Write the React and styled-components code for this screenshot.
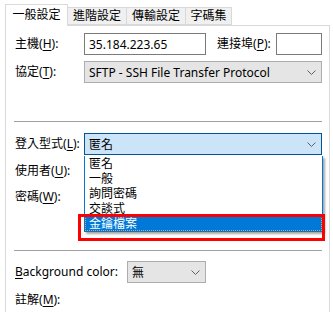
import React from "react";
import styled, { createGlobalStyle } from "styled-components";

const GlobalStyle = createGlobalStyle`
  html, body {
    margin: 0;
    padding: 0;
    background: #fff;
  }
  body {
    font-family: "Segoe UI", "Noto Sans", "Noto Sans CJK TC", sans-serif;
    font-size: 12px;
    color: #000;
  }
`;

const tabs = [
  { label: "一般設定", w: 63, active: true },
  { label: "進階設定", w: 59 },
  { label: "傳輸設定", w: 59 },
  { label: "字碼集", w: 46 },
];

const listItems = ["匿名", "一般", "詢問密碼", "交談式", "金鑰檔案"];

function Chevron() {
  return (
    <svg width="9" height="5" viewBox="0 0 9 5">
      <path d="M0.5 0.5 L4.5 4.5 L8.5 0.5" fill="none" stroke="#606060" strokeWidth="1" />
    </svg>
  );
}

function Label({ text, k }) {
  return (
    <span>
      {text}(<u>{k}</u>):
    </span>
  );
}

function App() {
  return (
    <Window>
      <GlobalStyle />
      <TabStrip>
        {tabs.map((t) => (
          <Tab key={t.label} $w={t.w} $active={t.active}>
            {t.label}
          </Tab>
        ))}
      </TabStrip>
      <Panel>
        <Row>
          <FieldLabel>
            <Label text="主機" k="H" />
          </FieldLabel>
          <TextBox $w={122}>35.184.223.65</TextBox>
          <FieldLabel $w={59} $ml={11}>
            <Label text="連接埠" k="P" />
          </FieldLabel>
          <TextBox $w={46} />
        </Row>
        <Row $mt={6}>
          <FieldLabel>
            <Label text="協定" k="T" />
          </FieldLabel>
          <Select $w={238}>
            <span>SFTP - SSH File Transfer Protocol</span>
            <Chevron />
          </Select>
        </Row>
        <Separator $mt={38} />
        <Row $mt={11}>
          <FieldLabel>
            <Label text="登入型式" k="L" />
          </FieldLabel>
          <Select $w={238} $focused>
            <span>匿名</span>
            <Chevron />
          </Select>
        </Row>
        <Row $mt={5}>
          <FieldLabel>
            <Label text="使用者" k="U" />
          </FieldLabel>
        </Row>
        <Row $mt={4}>
          <FieldLabel>
            <Label text="密碼" k="W" />
          </FieldLabel>
        </Row>
        <Separator $mt={42} />
        <Row $mt={10}>
          <FieldLabel $w={112}>
            <span>
              <u>B</u>ackground color:
            </span>
          </FieldLabel>
          <Select $w={79}>
            <span>無</span>
            <Chevron />
          </Select>
        </Row>
        <Row $mt={6}>
          <FieldLabel>
            <Label text="註解" k="M" />
          </FieldLabel>
        </Row>
      </Panel>

      <DropList>
        {listItems.map((item, i) => (
          <ListItem key={item} $selected={i === listItems.length - 1}>
            {item}
          </ListItem>
        ))}
      </DropList>
      <RedFrame />
    </Window>
  );
}

export default App;

const Window = styled.div`
  position: relative;
  width: 333px;
  height: 312px;
  overflow: hidden;
  background: #fff;
`;

const TabStrip = styled.div`
  display: flex;
  align-items: flex-end;
  height: 25px;
  padding-left: 5px;
  box-sizing: border-box;
`;

const Tab = styled.div`
  width: ${(p) => p.$w}px;
  height: ${(p) => (p.$active ? 22 : 18)}px;
  margin-bottom: ${(p) => (p.$active ? -1 : 0)}px;
  box-sizing: border-box;
  border: 1px solid #d9d9d9;
  border-left: ${(p) => (p.$active ? "1px solid #d9d9d9" : "none")};
  border-bottom: ${(p) => (p.$active ? "none" : "1px solid #d9d9d9")};
  background: ${(p) => (p.$active ? "#fff" : "#f0f0f0")};
  position: relative;
  z-index: ${(p) => (p.$active ? 2 : 1)};
  display: flex;
  align-items: center;
  justify-content: center;
  padding-bottom: ${(p) => (p.$active ? 1 : 0)}px;
  line-height: 1;
  white-space: nowrap;
`;

const Panel = styled.div`
  margin-left: 5px;
  width: 325px;
  height: 300px;
  box-sizing: border-box;
  border: 1px solid #d9d9d9;
  padding: 7px 0 0 9px;
  display: flex;
  flex-direction: column;
`;

const Row = styled.div`
  display: flex;
  align-items: center;
  height: 22px;
  margin-top: ${(p) => p.$mt || 0}px;
`;

const FieldLabel = styled.div`
  width: ${(p) => p.$w || 69}px;
  margin-left: ${(p) => p.$ml || 0}px;
  flex-shrink: 0;
  white-space: nowrap;
  line-height: 1;
  u {
    text-decoration-thickness: 1px;
    text-underline-offset: 2px;
  }
`;

const TextBox = styled.div`
  width: ${(p) => p.$w}px;
  height: 22px;
  box-sizing: border-box;
  border: 1px solid #7a7a7a;
  background: #fff;
  padding-left: 4px;
  display: flex;
  align-items: center;
  flex-shrink: 0;
`;

const Select = styled.div`
  width: ${(p) => p.$w}px;
  height: 22px;
  box-sizing: border-box;
  border: 1px solid ${(p) => (p.$focused ? "#005499" : "#adadad")};
  background: ${(p) => (p.$focused ? "#cce4f7" : "#e5e5e5")};
  padding: 0 5px 0 4px;
  display: flex;
  align-items: center;
  justify-content: space-between;
  white-space: nowrap;
  flex-shrink: 0;
`;

const Separator = styled.div`
  width: 308px;
  height: 1px;
  margin-left: -1px;
  margin-top: ${(p) => p.$mt}px;
  background: #a0a0a0;
  flex-shrink: 0;
`;

const DropList = styled.div`
  position: absolute;
  left: 84px;
  top: 156px;
  width: 239px;
  box-sizing: border-box;
  border: 1px solid #0078d7;
  border-top: none;
  background: #fff;
  box-shadow: 2px 2px 2px rgba(0, 0, 0, 0.35);
  z-index: 5;
`;

const ListItem = styled.div`
  height: 15px;
  box-sizing: border-box;
  padding: 1px 0 0 3px;
  line-height: 12px;
  white-space: nowrap;
  background: ${(p) => (p.$selected ? "#0078d7" : "#fff")};
  color: ${(p) => (p.$selected ? "#fff" : "#000")};
  border: 1px dotted ${(p) => (p.$selected ? "#f0a040" : "transparent")};
`;

const RedFrame = styled.div`
  position: absolute;
  left: 78px;
  top: 214px;
  width: 247px;
  height: 27px;
  box-sizing: border-box;
  border: 3px solid #ff0000;
  z-index: 6;
`;
